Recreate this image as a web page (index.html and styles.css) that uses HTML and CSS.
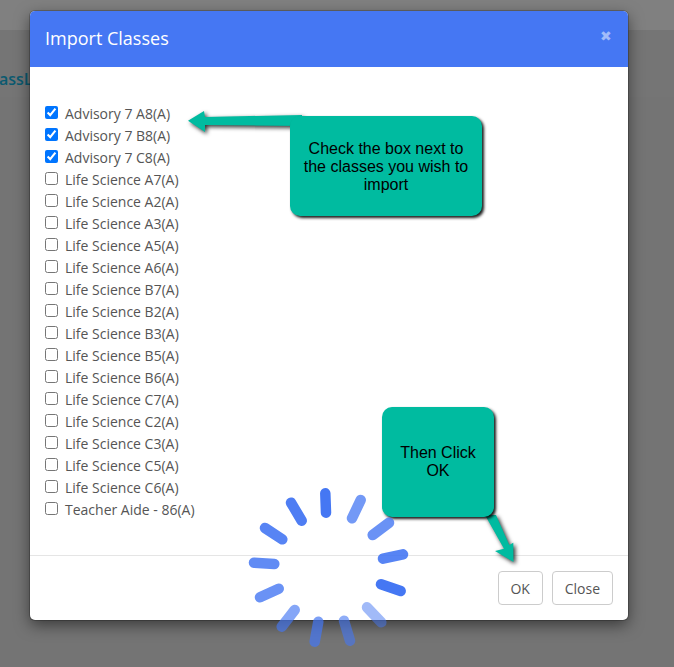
FILE: index.html
```html
<!DOCTYPE html>
<html lang="en">
<head>
<meta charset="utf-8">
<title>Import Classes</title>
<link rel="stylesheet" href="styles.css">
</head>
<body>
<div class="page">
  <div class="topbar"></div>
  <div class="pagehead"><span class="crumb">assL</span></div>
</div>
<div class="modal">
  <div class="modal-header">
    <h5 class="modal-title">Import Classes</h5>
    <span class="modal-x">&#10006;</span>
  </div>
  <div class="modal-body">
    <label class="row"><input type="checkbox" checked><span>Advisory 7 A8(A)</span></label>
    <label class="row"><input type="checkbox" checked><span>Advisory 7 B8(A)</span></label>
    <label class="row"><input type="checkbox" checked><span>Advisory 7 C8(A)</span></label>
    <label class="row"><input type="checkbox"><span>Life Science A7(A)</span></label>
    <label class="row"><input type="checkbox"><span>Life Science A2(A)</span></label>
    <label class="row"><input type="checkbox"><span>Life Science A3(A)</span></label>
    <label class="row"><input type="checkbox"><span>Life Science A5(A)</span></label>
    <label class="row"><input type="checkbox"><span>Life Science A6(A)</span></label>
    <label class="row"><input type="checkbox"><span>Life Science B7(A)</span></label>
    <label class="row"><input type="checkbox"><span>Life Science B2(A)</span></label>
    <label class="row"><input type="checkbox"><span>Life Science B3(A)</span></label>
    <label class="row"><input type="checkbox"><span>Life Science B5(A)</span></label>
    <label class="row"><input type="checkbox"><span>Life Science B6(A)</span></label>
    <label class="row"><input type="checkbox"><span>Life Science C7(A)</span></label>
    <label class="row"><input type="checkbox"><span>Life Science C2(A)</span></label>
    <label class="row"><input type="checkbox"><span>Life Science C3(A)</span></label>
    <label class="row"><input type="checkbox"><span>Life Science C5(A)</span></label>
    <label class="row"><input type="checkbox"><span>Life Science C6(A)</span></label>
    <label class="row"><input type="checkbox"><span>Teacher Aide - 86(A)</span></label>
  </div>
  <div class="modal-footer">
    <button class="btn btn-ok">OK</button>
    <button class="btn">Close</button>
  </div>
</div>
<svg class="arrows" width="674" height="667" viewBox="0 0 674 667" aria-hidden="true">
  <g class="arrow">
    <polygon points="188,120.7 204,111 205,117 302,115 302,126 205,125 205,132"/>
    <polygon points="485,515 496,515 509.3,545 513.3,542.7 513.5,562 495,551 504,548.7"/>
  </g>
</svg>
<div class="callout callout-check">Check the box next to the classes you wish to import</div>
<div class="callout callout-ok">Then Click<br>OK</div>
<svg class="spinner" width="674" height="667" viewBox="0 0 674 667" aria-hidden="true">
  <line x1="325.3" y1="493.3" x2="326" y2="512.7" class="s100"/>
  <line x1="360.7" y1="500" x2="352" y2="518.3" class="s75"/>
  <line x1="389" y1="522.7" x2="372.7" y2="535" class="s80"/>
  <line x1="403" y1="554.3" x2="383" y2="558.7" class="s90"/>
  <line x1="381" y1="584.3" x2="400.7" y2="591" class="s100"/>
  <line x1="367" y1="607.3" x2="381.3" y2="622.3" class="s50"/>
  <line x1="344" y1="620.7" x2="350" y2="640.7" class="s60"/>
  <line x1="318.3" y1="621.7" x2="314.7" y2="641.7" class="s70"/>
  <line x1="294.7" y1="610" x2="281.7" y2="626.7" class="s65"/>
  <line x1="278.7" y1="588.7" x2="260" y2="597.3" class="s80"/>
  <line x1="274.3" y1="564" x2="254" y2="562.7" class="s85"/>
  <line x1="282.3" y1="539.3" x2="265" y2="528" class="s90"/>
  <line x1="301.7" y1="520.7" x2="291" y2="502.7" class="s95"/>
</svg>
</body>
</html>
```
FILE: styles.css
```css
* { box-sizing: border-box; }
html, body { margin: 0; height: 100%; }
body {
  background: #747474;
  font-family: "Open Sans", sans-serif;
  overflow: hidden;
}
.page { height: 667px; }
.topbar { height: 30px; background: #808080; }
.pagehead { height: 67px; padding-top: 38px; background: #757575; }
.crumb {
  display: block;
  margin-left: -1px;
  font-size: 16px;
  line-height: 22px;
  font-weight: 600;
  color: #0a5a70;
}
.modal {
  position: absolute;
  left: 30px;
  top: 11px;
  width: 598px;
  height: 609px;
  display: flex;
  flex-direction: column;
  background: #fff;
  border-radius: 5px;
  box-shadow: 0 0 0 1px rgba(0, 0, 0, .2), 0 5px 15px rgba(0, 0, 0, .5);
  overflow: hidden;
}
.modal-header {
  height: 56px;
  flex: none;
  display: flex;
  justify-content: space-between;
  background: #4577f3;
  padding: 15px 15px 0;
}
.modal-title {
  margin: 0;
  font-size: 18px;
  line-height: 25px;
  font-weight: 500;
  color: #fff;
}
.modal-x {
  font-size: 14px;
  line-height: 16px;
  color: #a2bbf9;
  margin: 2px 1px 0 0;
}
.modal-body {
  flex: 1;
  padding: 35px 15px 0;
  display: flex;
  flex-direction: column;
}
.row {
  display: flex;
  align-items: center;
  height: 22px;
  font-size: 14px;
  color: #555;
}
.row input {
  width: 13px;
  height: 13px;
  margin: 0 7px 1px 0;
  accent-color: #0075ff;
}
.modal-footer {
  flex: none;
  height: 65px;
  border-top: 1px solid #e5e5e5;
  padding: 15px;
  display: flex;
  justify-content: flex-end;
  gap: 9px;
}
.btn {
  height: 34px;
  padding: 0 12px;
  font: 14px "Open Sans", sans-serif;
  color: #555;
  background: #fff;
  border: 1px solid #ccc;
  border-radius: 4px;
}
.btn-ok { width: 45px; padding: 0; }
.arrows, .spinner {
  position: absolute;
  left: 0;
  top: 0;
}
.arrow {
  fill: #00bba0;
  filter: drop-shadow(2px 2px 2px rgba(0, 0, 0, .8));
}
.callout {
  position: absolute;
  display: flex;
  align-items: center;
  justify-content: center;
  text-align: center;
  background: #00bba0;
  border-radius: 10px;
  box-shadow: 2px 2px 3px rgba(0, 0, 0, .9);
  font-family: "Liberation Sans", Arial, sans-serif;
  font-size: 16px;
  line-height: 18px;
  color: #000;
}
.callout-check {
  left: 290px;
  top: 116px;
  width: 192px;
  height: 100px;
  padding: 1px 12px 0;
}
.callout-ok {
  left: 382px;
  top: 407px;
  width: 112px;
  height: 110px;
}
.spinner line {
  stroke: #4577f3;
  stroke-width: 10.5;
  stroke-linecap: round;
}
.spinner .s100 { opacity: 1; }
.spinner .s95 { opacity: .95; }
.spinner .s90 { opacity: .9; }
.spinner .s85 { opacity: .85; }
.spinner .s80 { opacity: .8; }
.spinner .s75 { opacity: .75; }
.spinner .s70 { opacity: .7; }
.spinner .s65 { opacity: .65; }
.spinner .s60 { opacity: .6; }
.spinner .s50 { opacity: .5; }
```
